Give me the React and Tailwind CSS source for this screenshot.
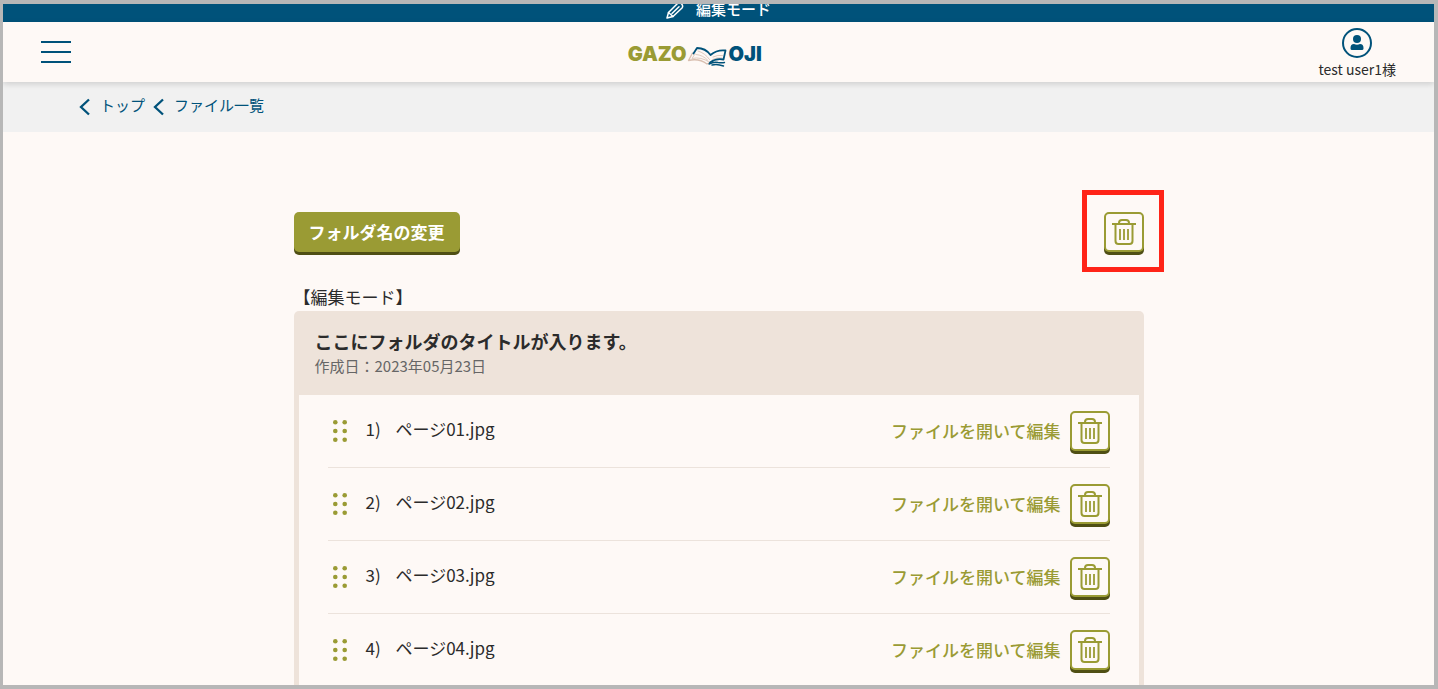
const PAGES = [
  { id: 1, name: 'ページ01.jpg' },
  { id: 2, name: 'ページ02.jpg' },
  { id: 3, name: 'ページ03.jpg' },
  { id: 4, name: 'ページ04.jpg' },
]

function Logo() {
  return (
    <a href="#" aria-label="GAZO MOJI" className="flex items-center pt-1 font-['Inter',sans-serif] text-xl leading-6 font-black">
      <span className="text-[#9a9b34]">GAZO</span>
      <svg viewBox="0 0 40 22" className="mt-1 h-[22px] w-10" fill="none" strokeLinecap="round" strokeLinejoin="round">
        <path d="M5.500 8 L1.500 15.500 Q12 13 20 19 Q23 17 26 17.500" stroke="#d9bfb0" strokeWidth="1.300" />
        <path d="M8 9 L5 13.500 Q14 11.500 22 17 M11 6 Q18 8 22.500 14.500 M9 9.500 Q16 10 21 15.500" stroke="#dfcbbf" strokeWidth="1" />
        <path d="M26 12 Q31 9.500 35.500 10.500 M25.500 14.500 Q30 12 35 13" stroke="#dfcbbf" strokeWidth="1" />
        <path d="M6.500 8.500 L10 3 Q18.500 3 23.500 10 Q30 4.500 38.500 5.500 L36.500 14.500 Q29 13 23 17.500" stroke="#00527a" strokeWidth="1.800" />
        <path d="M22 19 Q27 16.500 31 17.500 Q35 18 37.500 17.500 M25 20 Q30 18.500 36.500 21" stroke="#00527a" strokeWidth="1.400" />
      </svg>
      <span className="ml-0.5 text-[#00527a]">OJI</span>
    </a>
  )
}

function PencilIcon() {
  return (
    <svg viewBox="0 0 18 18" className="mb-[3px] size-[18px]" fill="none" stroke="currentColor" strokeWidth="1.500" strokeLinejoin="round" strokeLinecap="round">
      <path d="M1 17 L2.500 11.500 L11.500 2.500 Q13.500 1 15.500 2.800 Q17.500 5 16 7 L7 15.500 Z" />
      <path d="M6 12.500 L13 5.800 M2.500 11.500 L7 15.500" />
    </svg>
  )
}

function ChevronLeft() {
  return (
    <svg viewBox="0 0 11 18" className="h-[18px] w-[11px] shrink-0" fill="none" stroke="currentColor" strokeWidth="2.300">
      <path d="M10 1.500 L2 9 L10 16.500" />
    </svg>
  )
}

function TrashButton({ label }) {
  return (
    <button
      type="button"
      aria-label={label}
      className="flex size-10 shrink-0 items-center justify-center rounded-[5px] border-2 border-[#9a9b34] bg-[#fef9f6] text-[#9a9b34] shadow-[0_3px_0_#4f4f14]"
    >
      <svg viewBox="0 0 24 26" className="h-[26px] w-6 shrink-0" fill="none" stroke="currentColor" strokeWidth="2">
        <path d="M0 5 H24" />
        <path d="M7 5 V4 Q7 1 10 1 H14 Q17 1 17 4 V5" />
        <path d="M3.500 5 V22 Q3.500 25 6.500 25 H17.500 Q20.500 25 20.500 22 V5" />
        <path d="M8 10 V21 M12 10 V21 M16 10 V21" strokeWidth="1.800" />
      </svg>
    </button>
  )
}

function DragHandle() {
  return (
    <svg viewBox="0 0 14 22" className="h-[22px] w-3.5 shrink-0" fill="#9a9b34">
      {[2.3, 11.7].map((cx) => [2.3, 11, 19.7].map((cy) => <circle key={`${cx}-${cy}`} cx={cx} cy={cy} r="2.3" />))}
    </svg>
  )
}

function PageRow({ id, name }) {
  return (
    <li className="flex items-center border-b border-[#ece3dc] py-4">
      <button type="button" aria-label={`${name}を並べ替え`} className="px-[5px]">
        <DragHandle />
      </button>
      <span className="ml-3.5 w-[30px] pb-1">{id})</span>
      <span className="flex-1 pb-1">{name}</span>
      <a href="#" className="mr-[9px] font-medium text-[#9a9b34]">ファイルを開いて編集</a>
      <TrashButton label={`${name}を削除`} />
    </li>
  )
}

export default function App() {
  return (
    <div className="flex h-screen flex-col overflow-hidden border-4 border-l-[3px] border-[#b7b7b7] bg-[#fef9f6] font-['Noto_Sans_CJK_JP',sans-serif] text-[17px] leading-[26px] text-[#2b2b2b]">
      <div className="flex h-[18px] shrink-0 items-end justify-center gap-3 bg-[#00527a] text-[15px] leading-4 font-medium text-white">
        <PencilIcon />
        <span className="pb-[5px]">編集モード</span>
      </div>

      <header className="relative flex h-[60px] shrink-0 items-center justify-between px-[38px] shadow-[0_2px_6px_rgba(0,0,0,0.15)]">
        <button type="button" aria-label="メニュー" className="flex w-[30px] flex-col gap-2">
          <span className="h-0.5 bg-[#00527a]" />
          <span className="h-0.5 bg-[#00527a]" />
          <span className="h-0.5 bg-[#00527a]" />
        </button>
        <Logo />
        <a href="#" className="flex flex-col items-center pt-1.5 pb-0.5 text-sm leading-[22px]">
          <svg viewBox="0 0 30 30" className="size-[30px] text-[#00527a]" fill="currentColor">
            <circle cx="15" cy="15" r="14" fill="none" stroke="currentColor" strokeWidth="2" />
            <circle cx="15" cy="11" r="4" />
            <path d="M8.500 20 Q8.500 16 12 16 Q15 17.500 18 16 Q21.500 16 21.500 20 V20.500 Q21.500 22 20 22 H10 Q8.500 22 8.500 20.500 Z" />
          </svg>
          test user1様
        </a>
      </header>

      <nav aria-label="パンくずリスト" className="flex h-[50px] shrink-0 items-center gap-2 bg-[#f1f1f1] px-[76px] text-[15px] text-[#00527a]">
        <a href="#" className="flex items-center gap-2.5">
          <ChevronLeft />
          <span className="pb-1">トップ</span>
        </a>
        <a href="#" className="flex items-center gap-2.5">
          <ChevronLeft />
          <span className="pb-1">ファイル一覧</span>
        </a>
      </nav>

      <main className="mx-auto w-full max-w-[850px] pt-20">
        <div className="flex items-center justify-between">
          <button type="button" className="h-10 rounded-[5px] bg-[#9a9b34] px-[15px] font-bold text-white shadow-[0_3px_0_#4f4f14]">
            フォルダ名の変更
          </button>
          <div className="relative">
            <TrashButton label="フォルダを削除" />
            <div className="pointer-events-none absolute -top-[22px] -left-[22px] size-[82px] border-5 border-[#ff2418]" />
          </div>
        </div>

        <p className="mt-8 mb-px">【編集モード】</p>
        <section className="rounded-[5px] bg-[#eee3da] px-[5px] pb-[5px]">
          <div className="px-4 pt-[17px] pb-[17px]">
            <h1 className="text-lg leading-[26px] font-bold">ここにフォルダのタイトルが入ります。</h1>
            <p className="text-[15px] leading-6 text-[#666]">作成日：2023年05月23日</p>
          </div>
          <ul className="bg-[#fef9f6] px-[29px]">
            {PAGES.map((page) => (
              <PageRow key={page.id} {...page} />
            ))}
          </ul>
        </section>
      </main>
    </div>
  )
}
